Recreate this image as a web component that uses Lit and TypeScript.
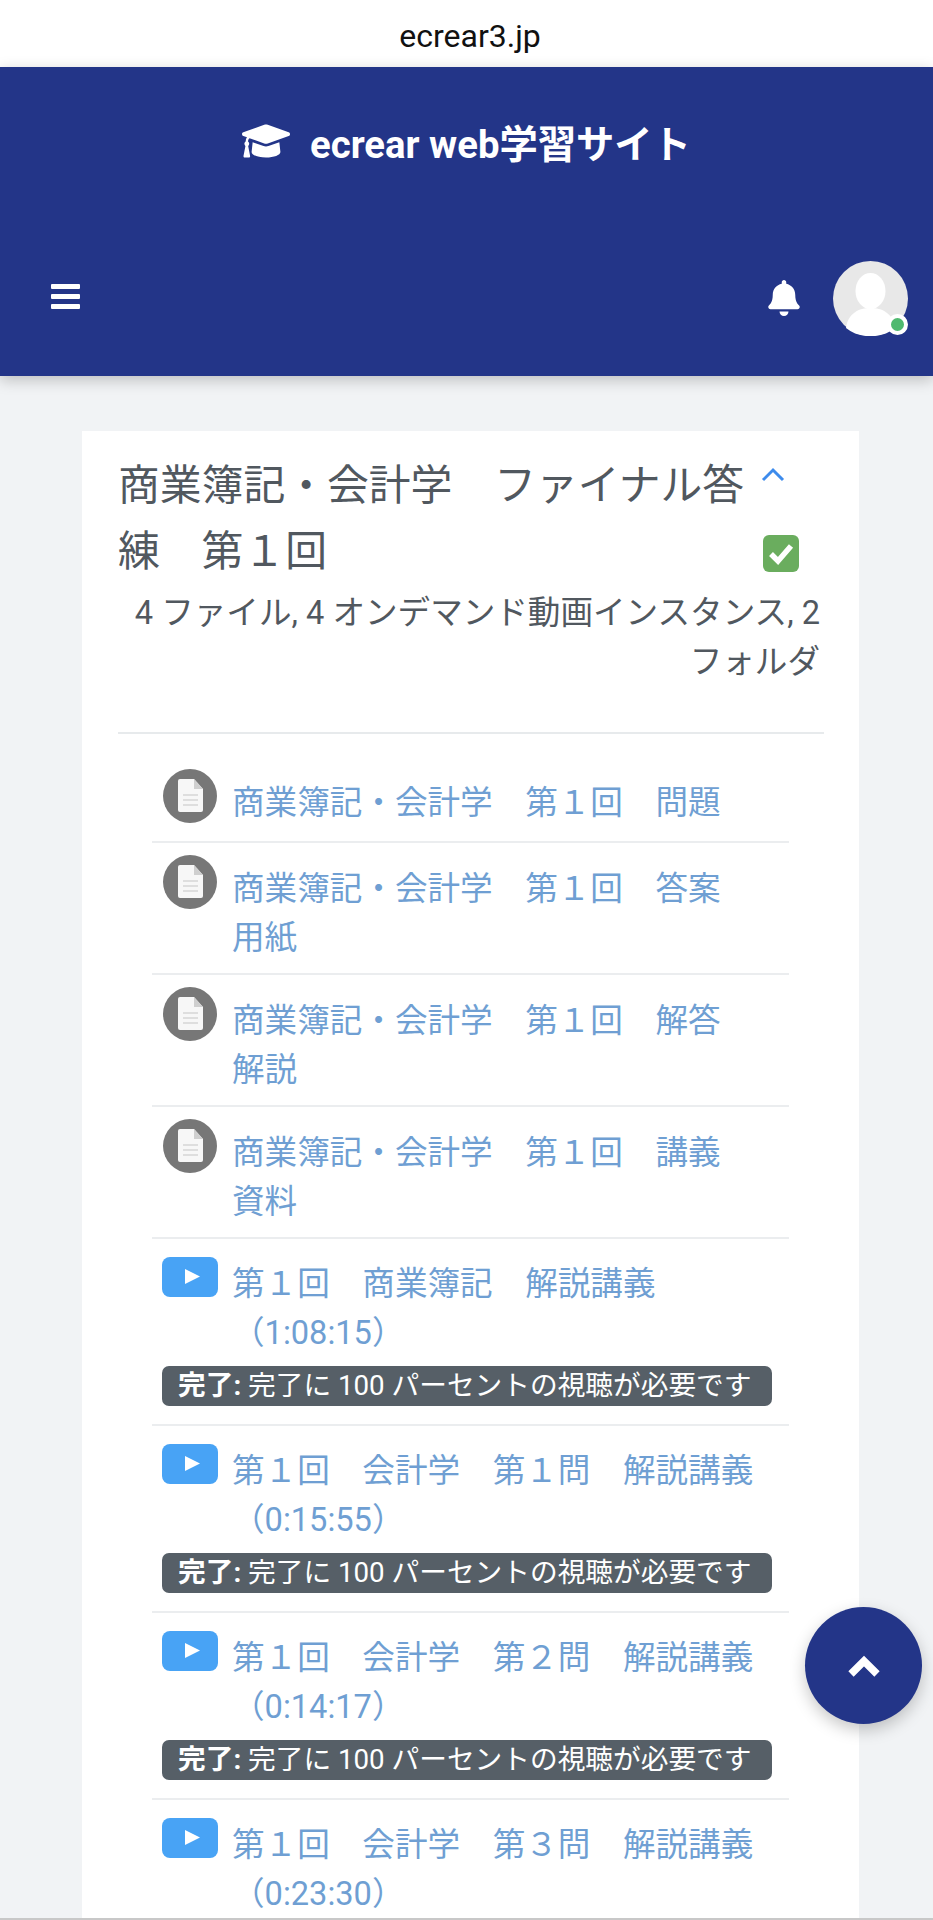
import { LitElement, css, html, nothing } from 'lit';
import { customElement } from 'lit/decorators.js';

type Item = { kind: 'file' | 'video'; title: string };

const ITEMS: Item[] = [
  { kind: 'file', title: '商業簿記・会計学　第１回　問題' },
  { kind: 'file', title: '商業簿記・会計学　第１回　答案用紙' },
  { kind: 'file', title: '商業簿記・会計学　第１回　解答解説' },
  { kind: 'file', title: '商業簿記・会計学　第１回　講義資料' },
  { kind: 'video', title: '第１回　商業簿記　解説講義（1:08:15）' },
  { kind: 'video', title: '第１回　会計学　第１問　解説講義（0:15:55）' },
  { kind: 'video', title: '第１回　会計学　第２問　解説講義（0:14:17）' },
  { kind: 'video', title: '第１回　会計学　第３問　解説講義（0:23:30）' },
];

@customElement('app-root')
export class AppRoot extends LitElement {
  static override styles = css`
    :host {
      display: block;
      position: relative;
      box-sizing: border-box;
      height: 1920px;
      overflow: hidden;
      background: #f1f3f5;
      border-bottom: 2px solid #c8c8c8;
      font-family: Roboto, 'Noto Sans CJK JP', sans-serif;
    }

    .url {
      height: 67px;
      padding-left: 7px;
      background: #fff;
      color: #111;
      font-size: 32px;
      line-height: 72px;
      text-align: center;
    }

    .nav {
      height: 309px;
      box-sizing: border-box;
      background: #233588;
      box-shadow: 0 4px 14px rgba(0, 0, 0, 0.22);
      color: #fff;
      display: flex;
      flex-direction: column;
      position: relative;
    }

    .brand {
      display: flex;
      justify-content: center;
      align-items: center;
      gap: 20px;
      height: 148px;
      font-size: 38.3px;
      font-weight: 700;
    }

    .tools {
      display: flex;
      align-items: center;
      padding: 0 25px 0 51px;
      height: 76px;
      margin-top: 45px;
    }

    .bars {
      margin-bottom: 4px;
    }

    .spacer {
      flex: 1;
    }

    .avatar {
      position: relative;
      width: 75px;
      height: 75px;
      margin-left: 33px;
    }

    .dot {
      position: absolute;
      right: 0;
      bottom: 1px;
      width: 13px;
      height: 13px;
      border: 4px solid #fff;
      border-radius: 50%;
      background: #4fb96f;
    }

    .card {
      margin: 55px 74px 0 82px;
      background: #fff;
      padding: 22px 35px 0 36px;
    }

    .head {
      display: grid;
      grid-template-columns: 1fr 76px;
    }

    h1 {
      margin: 0;
      font-size: 41.8px;
      line-height: 66px;
      font-weight: 400;
      color: #51585f;
    }

    .marks {
      display: flex;
      flex-direction: column;
      align-items: flex-start;
      padding-top: 14px;
      gap: 53px;
    }

    .chevron {
      margin-left: 13px;
    }

    .check {
      margin-left: 15px;
    }

    .summary {
      margin: 4px 0 0;
      padding-right: 4px;
      text-align: right;
      font-size: 32.6px;
      line-height: 49px;
      color: #51585f;
    }

    hr {
      margin: 45px 0 0;
      border: 0;
      border-top: 2px solid #e7eaec;
    }

    ul {
      list-style: none;
      margin: 0;
      padding: 0 35px 0 34px;
    }

    li {
      padding: 0 10px;
      border-bottom: 2px solid #ebedef;
    }

    li.file {
      padding-top: 11px;
      padding-bottom: 10px;
    }

    li.file:first-child {
      padding-top: 34px;
      padding-bottom: 13px;
    }

    li.video {
      padding-top: 18px;
      padding-bottom: 18px;
    }

    .row {
      display: flex;
      align-items: flex-start;
      gap: 14px;
    }

    .icon {
      flex: none;
      width: 56px;
      display: block;
    }

    .title {
      font-size: 32.6px;
      line-height: 49px;
      color: #6f9fd3;
    }

    .file .title {
      width: 510px;
      margin-top: 11px;
    }

    .video .title {
      width: 540px;
      margin-top: 3px;
    }

    .rule {
      margin-top: 8px;
      width: 610px;
      box-sizing: border-box;
      padding: 0 16px;
      height: 40px;
      line-height: 40px;
      border-radius: 7px;
      background: #565f67;
      color: #fff;
      font-size: 27.7px;
      white-space: nowrap;
    }

    .rule strong {
      font-weight: 700;
    }

    .top {
      position: absolute;
      left: 805px;
      top: 1607px;
      width: 117px;
      height: 117px;
      border-radius: 50%;
      background: #233588;
      box-shadow: 0 6px 16px rgba(0, 0, 0, 0.22);
      display: flex;
      align-items: center;
      justify-content: center;
    }
  `;

  private fileIcon() {
    return html`<svg class="icon" viewBox="0 0 56 56" height="56">
      <circle cx="28" cy="28" r="27" fill="#777"></circle>
      <path d="M18 11h14l9 10v21a2 2 0 0 1-2 2H18a2 2 0 0 1-2-2V13a2 2 0 0 1 2-2z" fill="#f7f7f7"></path>
      <path d="M32 11l9 10h-9z" fill="#cfcfcf"></path>
      <path d="M21 27h15M21 32h15M21 37h15" stroke="#d6d6d6" stroke-width="1.5"></path>
    </svg>`;
  }

  private videoIcon() {
    return html`<svg class="icon" viewBox="0 0 56 40" height="40">
      <rect width="56" height="40" rx="8" fill="#48a3f5"></rect>
      <path d="M23 12l15 7.500-15 7.500z" fill="#fff"></path>
    </svg>`;
  }

  private renderItem(item: Item) {
    return html`<li class=${item.kind}>
      <div class="row">
        ${item.kind === 'file' ? this.fileIcon() : this.videoIcon()}
        <div class="title">${item.title}</div>
      </div>
      ${item.kind === 'video'
        ? html`<div class="rule"><strong>完了:</strong> 完了に 100 パーセントの視聴が必要です</div>`
        : nothing}
    </li>`;
  }

  protected override render() {
    return html`
      <div class="url">ecrear3.jp</div>
      <header class="nav">
        <div class="brand">
          <svg width="48" height="44" viewBox="0 0 640 512" preserveAspectRatio="none">
            <path fill="#fff" d="M622.34 153.2L343.4 67.5c-15.2-4.67-31.6-4.67-46.79 0L17.66 153.2c-23.54 7.23-23.54 38.36 0 45.59l48.63 14.94c-10.67 13.19-17.23 29.28-17.88 46.9C38.78 266.15 32 276.11 32 288c0 10.78 5.68 19.85 13.86 25.65L20.33 428.53C18.11 438.52 25.71 448 35.94 448h56.11c10.24 0 17.84-9.48 15.62-19.47L82.14 313.65C90.32 307.85 96 298.78 96 288c0-11.57-6.47-21.25-15.66-26.87.76-15.02 8.44-28.3 20.69-36.72L296.6 284.5c9.06 2.78 26.44 6.25 46.79 0l278.95-85.7c23.55-7.24 23.55-38.36 0-45.6zM352.79 315.09c-28.53 8.76-52.84 3.92-65.59 0l-145.02-44.55L128 384c0 35.35 85.96 64 192 64s192-28.65 192-64l-14.18-113.47-145.03 44.56z"></path>
          </svg>
          <span>ecrear web学習サイト</span>
        </div>
        <div class="tools">
          <svg class="bars" width="29" height="25" viewBox="0 0 29 25">
            <path d="M0 1a1 1 0 0 1 1-1h27a1 1 0 0 1 1 1v3a1 1 0 0 1-1 1H1a1 1 0 0 1-1-1zM0 11a1 1 0 0 1 1-1h27a1 1 0 0 1 1 1v3a1 1 0 0 1-1 1H1a1 1 0 0 1-1-1zM0 21a1 1 0 0 1 1-1h27a1 1 0 0 1 1 1v3a1 1 0 0 1-1 1H1a1 1 0 0 1-1-1z" fill="#fff"></path>
          </svg>
          <div class="spacer"></div>
          <svg width="32" height="36" viewBox="0 0 448 512">
            <path fill="#fff" d="M224 512c35.32 0 63.97-28.65 63.97-64H160.03c0 35.35 28.65 64 63.97 64zm215.39-149.71c-19.32-20.76-55.47-51.99-55.47-154.29 0-77.7-54.48-139.9-127.94-155.16V32c0-17.67-14.32-32-31.98-32s-31.98 14.33-31.98 32v20.84C118.56 68.1 64.08 130.3 64.08 208c0 102.3-36.15 133.53-55.47 154.29-6 6.45-8.66 14.16-8.61 21.71.11 16.4 12.98 32 32.1 32h383.8c19.12 0 32-15.6 32.1-32 .05-7.55-2.61-15.27-8.61-21.71z"></path>
          </svg>
          <div class="avatar">
            <svg width="75" height="75" viewBox="0 0 75 75">
              <circle cx="37.500" cy="37.500" r="37.500" fill="#e8e8e8"></circle>
              <ellipse cx="37.500" cy="30" rx="15" ry="18" fill="#fff"></ellipse>
              <path d="M13 67c2-15 13-20 24.500-20S60 52 62 67c-13 11-36 11-49 0z" fill="#fff"></path>
            </svg>
            <span class="dot"></span>
          </div>
        </div>
      </header>
      <main class="card">
        <div class="head">
          <h1>商業簿記・会計学　ファイナル答練　第１回</h1>
          <div class="marks">
            <svg class="chevron" width="24" height="15" viewBox="0 0 24 15">
              <path d="M2 13L12 3l10 10" fill="none" stroke="#3d8bec" stroke-width="3"></path>
            </svg>
            <svg class="check" width="36" height="37" viewBox="0 0 36 37">
              <rect width="36" height="37" rx="6" fill="#6aad5e"></rect>
              <path d="M8 19l7 7 13-15" fill="none" stroke="#fff" stroke-width="5.500"></path>
            </svg>
          </div>
        </div>
        <p class="summary">4 ファイル, 4 オンデマンド動画インスタンス, 2 フォルダ</p>
        <hr />
        <ul>${ITEMS.map((item) => this.renderItem(item))}</ul>
      </main>
      <div class="top">
        <svg width="34" height="22" viewBox="0 0 34 22">
          <path d="M4 19L17 6l13 13" fill="none" stroke="#fff" stroke-width="7.500"></path>
        </svg>
      </div>
    `;
  }
}
